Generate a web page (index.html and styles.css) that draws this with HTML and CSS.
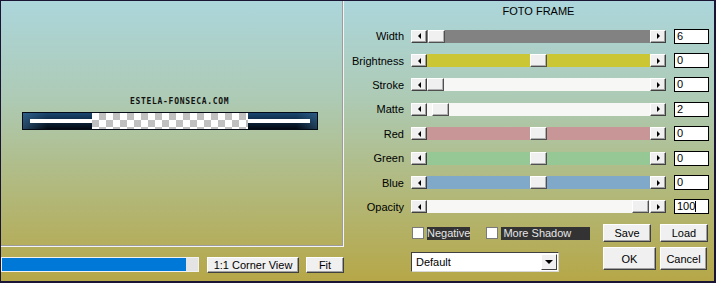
FILE: index.html
```html
<!DOCTYPE html>
<html lang="en">
  <head>
    <meta charset="utf-8" />
    <meta name="viewport" content="width=device-width, initial-scale=1.0" />
    <title>Foto Frame</title>
    <link rel="stylesheet" href="styles.css">
  </head>
  <body>
    <div class="window">
      <div class="left">
        <div class="preview">
          <div class="site">ESTELA-FONSECA.COM</div>
          <div class="frame">
            <div class="frame-end end-left"><span class="line"></span></div>
            <div class="checker"></div>
            <div class="frame-end end-right"><span class="line"></span></div>
          </div>
        </div>
        <div class="left-bar">
          <div class="progress"><div class="progress-fill"></div></div>
          <button class="btn corner">1:1 Corner View</button>
          <button class="btn fit">Fit</button>
        </div>
      </div>

      <div class="right">
        <div class="title">FOTO FRAME</div>
        <div class="sliders">
          <div class="row">
            <span class="label">Width</span>
            <div class="scroll">
              <span class="arrow arrow-left"></span>
              <div class="track gray"><span class="thumb" style="left:1px"></span></div>
              <span class="arrow arrow-right"></span>
            </div>
            <div class="field">6</div>
          </div>
          <div class="row">
            <span class="label">Brightness</span>
            <div class="scroll">
              <span class="arrow arrow-left"></span>
              <div class="track yellow"><span class="thumb" style="left:103px"></span></div>
              <span class="arrow arrow-right"></span>
            </div>
            <div class="field">0</div>
          </div>
          <div class="row">
            <span class="label">Stroke</span>
            <div class="scroll">
              <span class="arrow arrow-left"></span>
              <div class="track white"><span class="thumb" style="left:0px"></span></div>
              <span class="arrow arrow-right"></span>
            </div>
            <div class="field">0</div>
          </div>
          <div class="row">
            <span class="label">Matte</span>
            <div class="scroll">
              <span class="arrow arrow-left"></span>
              <div class="track white"><span class="thumb" style="left:5px"></span></div>
              <span class="arrow arrow-right"></span>
            </div>
            <div class="field">2</div>
          </div>
          <div class="row">
            <span class="label">Red</span>
            <div class="scroll">
              <span class="arrow arrow-left"></span>
              <div class="track red"><span class="thumb" style="left:103px"></span></div>
              <span class="arrow arrow-right"></span>
            </div>
            <div class="field">0</div>
          </div>
          <div class="row">
            <span class="label">Green</span>
            <div class="scroll">
              <span class="arrow arrow-left"></span>
              <div class="track green"><span class="thumb" style="left:103px"></span></div>
              <span class="arrow arrow-right"></span>
            </div>
            <div class="field">0</div>
          </div>
          <div class="row">
            <span class="label">Blue</span>
            <div class="scroll">
              <span class="arrow arrow-left"></span>
              <div class="track blue"><span class="thumb" style="left:103px"></span></div>
              <span class="arrow arrow-right"></span>
            </div>
            <div class="field">0</div>
          </div>
          <div class="row">
            <span class="label">Opacity</span>
            <div class="scroll">
              <span class="arrow arrow-left"></span>
              <div class="track white"><span class="thumb" style="left:205px"></span></div>
              <span class="arrow arrow-right"></span>
            </div>
            <div class="field">100<span class="caret"></span></div>
          </div>
        </div>

        <div class="bottom">
          <div class="bottom-row">
            <div class="checks">
              <span class="check"></span><span class="check-label">Negative</span>
              <span class="check second"></span><span class="check-label wide">More Shadow</span>
            </div>
            <button class="btn save">Save</button>
            <button class="btn load">Load</button>
          </div>
          <div class="bottom-row second-row">
            <div class="select">
              <span class="select-text">Default</span>
              <span class="select-arrow"></span>
            </div>
            <button class="btn ok">OK</button>
            <button class="btn cancel">Cancel</button>
          </div>
        </div>
      </div>
    </div>
  </body>
</html>
```

FILE: styles.css
```css
/* Reset */
* {
  margin: 0;
  padding: 0;
  box-sizing: border-box;
}

body {
  font-family: "Liberation Sans", Arial, sans-serif;
  font-size: 11px;
  color: #000;
}

/* Dialog window */
.window {
  width: 716px;
  height: 283px;
  display: flex;
  border-style: solid;
  border-color: #1b1535;
  border-width: 1px 2px 2px 1px;
  background: linear-gradient(#acd6dc 0%, #adcab4 35%, #b1ba80 65%, #b6a748 100%);
}

/* Left side: preview */
.left {
  width: 343px;
  display: flex;
  flex-direction: column;
}

.preview {
  height: 246px;
  padding-top: 97px;
  border-right: 1px solid #f4f4f4;
  border-bottom: 1px solid #f4f4f4;
  box-shadow: inset -1px -1px 0 #9c9c9c;
}

.site {
  font-family: "DejaVu Sans Mono", monospace;
  font-weight: bold;
  font-size: 8px;
  line-height: 8px;
  letter-spacing: 0.7px;
  padding-left: 129px;
  color: #111;
}

.frame {
  width: 296px;
  height: 18px;
  margin: 6px 0 0 21px;
  display: flex;
  border: 1px solid #040b16;
  background: linear-gradient(#1a4670, #020912);
}

.frame-end {
  width: 69px;
  display: flex;
  align-items: center;
}

.end-left {
  padding-left: 7px;
  background: linear-gradient(to right, rgba(60, 110, 150, 0.6), rgba(0, 0, 0, 0) 35%);
}

.end-right {
  padding-right: 7px;
  background: linear-gradient(to left, rgba(60, 110, 150, 0.5), rgba(0, 0, 0, 0) 30%);
}

.line {
  flex: 1;
  height: 4px;
  background: #fff;
}

.checker {
  width: 156px;
  background-color: #fff;
  background-image: conic-gradient(#c0c0c0 25%, #fff 0 50%, #c0c0c0 0 75%, #fff 0);
  background-size: 14px 14px;
}

.left-bar {
  display: flex;
  align-items: flex-start;
  margin-top: 10px;
}

.progress {
  width: 198px;
  height: 15px;
  border: 1px solid #f2f2f2;
  background: #e4e4e4;
}

.progress-fill {
  width: 184px;
  height: 100%;
  background: #0078d7;
}

/* Buttons */
.btn {
  font-family: "Liberation Sans", Arial, sans-serif;
  font-size: 11px;
  color: #000;
  background: #f0f0f0;
  border: 1px solid;
  border-color: #fff #404040 #404040 #fff;
  box-shadow: inset -1px -1px 0 #a0a0a0;
}

.corner {
  width: 92px;
  height: 16px;
  margin-left: 8px;
}

.fit {
  width: 38px;
  height: 16px;
  margin-left: 7px;
}

/* Right side: controls */
.right {
  flex: 1;
  padding-top: 4px;
}

.title {
  line-height: 13px;
  padding-left: 67px;
  width: 322px;
  text-align: center;
}

.sliders {
  margin-top: 6px;
}

.row {
  height: 24.4px;
  display: flex;
  align-items: center;
}

.label {
  width: 60px;
  text-align: right;
}

.scroll {
  width: 255px;
  height: 13px;
  margin-left: 7px;
  display: flex;
}

.arrow {
  width: 16px;
  height: 13px;
  background: #f0f0f0;
  border: 1px solid;
  border-color: #fff #404040 #404040 #fff;
  box-shadow: inset -1px -1px 0 #a0a0a0;
  display: flex;
  align-items: center;
  justify-content: center;
}

.arrow::before {
  content: "";
  border-top: 3px solid transparent;
  border-bottom: 3px solid transparent;
}

.arrow-left::before {
  border-right: 3px solid #000;
}

.arrow-right::before {
  border-left: 3px solid #000;
}

.track {
  flex: 1;
  position: relative;
}

.track.gray { background: #828282; }
.track.yellow { background: #cbc734; }
.track.white { background: #f7f7f5; }
.track.red { background: #c99698; }
.track.green { background: #96c896; }
.track.blue { background: #80a9c9; }

.thumb {
  position: absolute;
  top: 0;
  width: 17px;
  height: 13px;
  background: #f0f0f0;
  border: 1px solid;
  border-color: #fff #505050 #505050 #fff;
  box-shadow: inset -1px -1px 0 #b0b0b0;
}

.field {
  width: 35px;
  height: 15px;
  margin-left: 8px;
  padding-left: 2px;
  line-height: 13px;
  background: #fff;
  border: 1px solid #000;
  display: flex;
  align-items: center;
}

.caret {
  width: 1px;
  height: 11px;
  background: #000;
}

/* Bottom controls */
.bottom {
  padding-left: 67px;
  margin-top: 5px;
}

.bottom-row {
  display: flex;
  align-items: center;
  height: 18px;
}

.second-row {
  height: 23px;
  margin-top: 5px;
  align-items: flex-start;
}

.checks {
  width: 192px;
  display: flex;
  align-items: center;
}

.check {
  width: 12px;
  height: 12px;
  margin-left: 1px;
  background: #fff;
  border: 1px solid #7a7a7a;
}

.check.second {
  margin-left: 16px;
}

.check-label {
  height: 13px;
  line-height: 13px;
  margin-left: 3px;
  background: #333;
  color: #e6e6e6;
}

.check-label.wide {
  width: 89px;
  padding-left: 2px;
}

.save {
  width: 48px;
  height: 18px;
}

.load {
  width: 48px;
  height: 18px;
  margin-left: 9px;
}

.ok {
  width: 53px;
  height: 23px;
}

.cancel {
  width: 47px;
  height: 23px;
  margin-left: 4px;
}

.select {
  width: 148px;
  height: 20px;
  margin-top: 5px;
  margin-right: 44px;
  display: flex;
  align-items: center;
  justify-content: space-between;
  background: #fff;
  border: 1px solid;
  border-color: #404040 #d8d8d8 #d8d8d8 #404040;
}

.select-text {
  padding-left: 4px;
}

.select-arrow {
  width: 16px;
  height: 16px;
  margin-right: 1px;
  background: #f0f0f0;
  border: 1px solid;
  border-color: #fff #404040 #404040 #fff;
  display: flex;
  align-items: center;
  justify-content: center;
}

.select-arrow::before {
  content: "";
  border-left: 4px solid transparent;
  border-right: 4px solid transparent;
  border-top: 4px solid #000;
}
```
